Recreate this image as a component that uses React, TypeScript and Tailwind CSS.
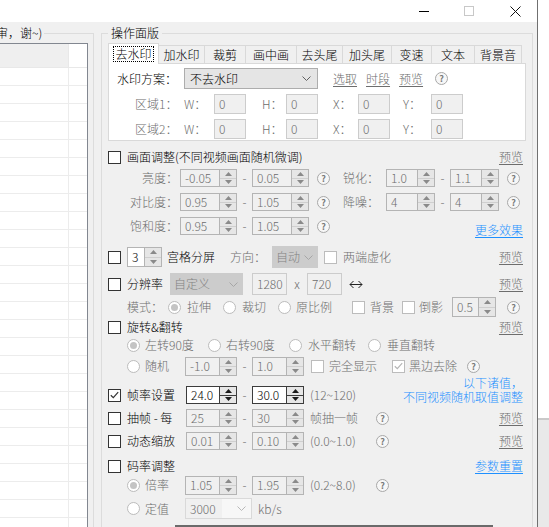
import React from "react";

const GRAY = "text-[#6d6d6d]";

function Check({
  checked = false,
  disabled = false,
  className = "",
}: {
  checked?: boolean;
  disabled?: boolean;
  className?: string;
}) {
  return (
    <span
      className={`flex h-[13px] w-[13px] shrink-0 items-center justify-center border bg-white ${
        disabled ? "border-[#bcbcbc]" : "border-[#333333]"
      } ${className}`}
    >
      {checked && (
        <svg width="9" height="8" viewBox="0 0 9 8">
          <path
            d="M0.8 4.2L3.3 6.6L8.2 1.2"
            fill="none"
            stroke={disabled ? "#b5b5b5" : "#333333"}
            strokeWidth="1.2"
          />
        </svg>
      )}
    </span>
  );
}

function Radio({ checked = false, className = "" }: { checked?: boolean; className?: string }) {
  return (
    <span
      className={`flex h-[13px] w-[13px] shrink-0 items-center justify-center rounded-full border border-[#bcbcbc] bg-white ${className}`}
    >
      {checked && <span className="h-[7px] w-[7px] rounded-full bg-[#c4c4c4]" />}
    </span>
  );
}

function Help({ className = "" }: { className?: string }) {
  return (
    <span
      className={`flex h-[13px] w-[13px] shrink-0 items-center justify-center rounded-full border border-[#a8a8a8] bg-[#f7f7f7] text-[9px] font-bold leading-none text-[#7a7a7a] ${className}`}
    >
      ?
    </span>
  );
}

function Tri({ up = false, color }: { up?: boolean; color: string }) {
  return (
    <svg width="7" height="4" viewBox="0 0 7 4">
      <path d={up ? "M0 4L3.5 0L7 4Z" : "M0 0L3.5 4L7 0Z"} fill={color} />
    </svg>
  );
}

function Chevron({ color }: { color: string }) {
  return (
    <svg width="9" height="5" viewBox="0 0 9 5">
      <path d="M0.5 0.5L4.5 4.5L8.5 0.5" fill="none" stroke={color} />
    </svg>
  );
}

// numeric up-down box
function Spin({
  v,
  className = "",
  on = false,
  dark = false,
}: {
  v: string;
  className?: string;
  on?: boolean;
  dark?: boolean;
}) {
  const line = dark ? "border-[#3c3c3c]" : "border-[#b4b4b4]";
  const arrow = dark ? "#1a1a1a" : "#8a8a8a";
  return (
    <div className={`flex shrink-0 border ${line} ${on ? "bg-white" : "bg-[#f0f0f0]"} ${className}`}>
      <div
        className={`flex flex-1 items-center border-r ${line} pl-[4px] ${
          on ? "text-black" : GRAY
        }`}
      >
        {v}
      </div>
      <div className="flex w-[16px] flex-col bg-[#e6e6e6]">
        <div className="flex flex-1 items-center justify-center">
          <Tri up color={arrow} />
        </div>
        <div className={`flex flex-1 items-center justify-center border-t ${dark ? "border-[#3c3c3c]" : "border-[#cfcfcf]"}`}>
          <Tri color={arrow} />
        </div>
      </div>
    </div>
  );
}

function Combo({ v, className = "" }: { v: string; className?: string }) {
  return (
    <div
      className={`flex shrink-0 items-center justify-between bg-[#cccccc] pl-[4px] pr-[5px] text-[#838383] ${className}`}
    >
      <span>{v}</span>
      <Chevron color="#a6a6a6" />
    </div>
  );
}

function Field({ v, className = "" }: { v: string; className?: string }) {
  return (
    <div
      className={`flex shrink-0 items-center border border-[#cccccc] bg-[#f0f0f0] pl-[4px] ${GRAY} ${className}`}
    >
      {v}
    </div>
  );
}

function Dash() {
  return <span className={`w-[15px] shrink-0 text-center ${GRAY}`}>-</span>;
}

function Preview() {
  return <span className={`ml-auto ${GRAY} underline underline-offset-2`}>预览</span>;
}

const tabs = [
  { t: "加水印", w: "w-[46px]" },
  { t: "裁剪", w: "w-[41px]" },
  { t: "画中画", w: "w-[51px]" },
  { t: "去头尾", w: "w-[46px]" },
  { t: "加头尾", w: "w-[49px]" },
  { t: "变速", w: "w-[40px]" },
  { t: "文本", w: "w-[43px]" },
  { t: "背景音", w: "w-[47px]" },
];

export default function App() {
  return (
    <div className="flex h-[527px] w-[549px] overflow-hidden bg-white font-['Noto_Sans_CJK_SC',sans-serif] text-[12px] font-light leading-none text-black">
      {/* window */}
      <div className="flex w-[538px] shrink-0 flex-col border-r border-[#707070] bg-[#f0f0f0]">
        {/* title bar */}
        <div className="flex h-[22px] shrink-0 items-center bg-white pr-[16px]">
          <span className="ml-auto h-px w-[10px] bg-black" />
          <span className="ml-[35px] h-[10px] w-[10px] border border-[#c8c8c8]" />
          <svg className="ml-[36px]" width="11" height="11" viewBox="0 0 11 11">
            <path d="M0.5 0.5L10.5 10.5M10.5 0.5L0.5 10.5" stroke="#111" />
          </svg>
        </div>

        <div className="flex flex-1">
          {/* left group: file list */}
          <fieldset className="mt-[4px] w-[94px] shrink-0 border-t border-r border-[#dcdcdc] pr-[5px]">
            <legend className="-ml-[4px] pr-[2px] leading-[14px]">审，谢~)</legend>
            <div className="mt-[3px] w-[88px] border-t border-r border-[#828790] bg-white">
              <div className="flex h-[24px] border-b border-[#e8e8e8]">
                <div className="w-[69px] border-r border-[#e8e8e8] bg-[#efefef]" />
              </div>
              {Array.from({ length: 26 }).map((_, i) => (
                <div key={i} className="flex h-[18px] border-b border-[#ececec]">
                  <div className="w-[69px] border-r border-[#ececec]" />
                </div>
              ))}
            </div>
          </fieldset>

          {/* right group: operation panel */}
          <fieldset className="ml-[7px] mt-[4px] w-[432px] shrink-0 border border-[#dcdcdc] pl-[6px]">
            <legend className="px-[3px] leading-[14px]">操作面版</legend>

            {/* tabs */}
            <div className="mt-[3px] flex h-[20px] items-end">
              <div className="relative z-10 -mb-px flex h-[21px] w-[51px] items-center justify-center border-x border-t border-[#d9d9d9] bg-white">
                <span className="px-[1px] py-[1px] outline-1 outline-dotted outline-black">去水印</span>
              </div>
              {tabs.map((t) => (
                <div
                  key={t.t}
                  className={`flex h-[18px] items-center justify-center border-t border-r border-[#d9d9d9] ${t.w}`}
                >
                  {t.t}
                </div>
              ))}
            </div>
            <div className="h-[78px] w-[418px] border border-[#d9d9d9] bg-white pl-[8px] pt-[4px]">
              <div className="flex h-[21px] items-center">
                <span className="w-[67px] shrink-0">水印方案：</span>
                <div className="flex h-[21px] w-[134px] shrink-0 items-center justify-between border border-[#adadad] bg-[#e5e5e5] pl-[5px] pr-[6px]">
                  <span>不去水印</span>
                  <Chevron color="#606060" />
                </div>
                <span className={`ml-[15px] ${GRAY} underline underline-offset-2`}>选取</span>
                <span className={`ml-[9px] ${GRAY} underline underline-offset-2`}>时段</span>
                <span className={`ml-[9px] ${GRAY} underline underline-offset-2`}>预览</span>
                <Help className="ml-[12px]" />
              </div>
              {["区域1：", "区域2："].map((r) => (
                <div key={r} className={`mt-[5px] flex h-[20px] items-center ${GRAY}`}>
                  <span className="ml-[18px] w-[49px] shrink-0">{r}</span>
                  <span className="w-[30px] shrink-0">W：</span>
                  <Field v="0" className="h-[20px] w-[32px]" />
                  <span className="ml-[16px] w-[24px] shrink-0">H：</span>
                  <Field v="0" className="h-[20px] w-[32px]" />
                  <span className="ml-[15px] w-[25px] shrink-0">X：</span>
                  <Field v="0" className="h-[20px] w-[32px]" />
                  <span className="ml-[13px] w-[28px] shrink-0">Y：</span>
                  <Field v="0" className="h-[20px] w-[32px]" />
                </div>
              ))}
            </div>

            {/* option rows */}
            <div className="w-[415px]">
              <div className="mt-[6px] flex h-[20px] items-center">
                <Check />
                <span className="ml-[6px]">画面调整(不同视频画面随机微调)</span>
                <Preview />
              </div>

              <div className="mt-[2px] flex h-[18px] items-center">
                <span className={`w-[70px] shrink-0 text-right ${GRAY}`}>亮度：</span>
                <Spin v="-0.05" className="ml-[2px] h-[18px] w-[57px]" />
                <Dash />
                <Spin v="0.05" className="h-[18px] w-[57px]" />
                <Help className="ml-[8px]" />
                <span className={`ml-[13px] w-[43px] shrink-0 ${GRAY}`}>锐化：</span>
                <Spin v="1.0" className="h-[18px] w-[49px]" />
                <Dash />
                <Spin v="1.1" className="h-[18px] w-[49px]" />
                <Help className="ml-[8px]" />
              </div>

              <div className="mt-[6px] flex h-[18px] items-center">
                <span className={`w-[70px] shrink-0 text-right ${GRAY}`}>对比度：</span>
                <Spin v="0.95" className="ml-[2px] h-[18px] w-[57px]" />
                <Dash />
                <Spin v="1.05" className="h-[18px] w-[57px]" />
                <Help className="ml-[8px]" />
                <span className={`ml-[13px] w-[43px] shrink-0 ${GRAY}`}>降噪：</span>
                <Spin v="4" className="h-[18px] w-[49px]" />
                <Dash />
                <Spin v="4" className="h-[18px] w-[49px]" />
                <Help className="ml-[8px]" />
              </div>

              <div className="mt-[6px] flex h-[18px] items-center">
                <span className={`w-[70px] shrink-0 text-right ${GRAY}`}>饱和度：</span>
                <Spin v="0.95" className="ml-[2px] h-[18px] w-[57px]" />
                <Dash />
                <Spin v="1.05" className="h-[18px] w-[57px]" />
                <Help className="ml-[8px]" />
                <span className="-mb-[8px] ml-auto text-[#1e90ff] underline underline-offset-2">更多效果</span>
              </div>

              <div className="mt-[11px] flex h-[22px] items-center">
                <Check />
                <Spin v="3" on className="ml-[6px] h-[20px] w-[35px]" />
                <span className="ml-[5px] w-[48px] shrink-0">宫格分屏</span>
                <span className={`ml-[15px] w-[42px] shrink-0 ${GRAY}`}>方向：</span>
                <Combo v="自动" className="h-[22px] w-[46px]" />
                <Check disabled className="ml-[6px]" />
                <span className={`ml-[6px] ${GRAY}`}>两端虚化</span>
                <Preview />
              </div>

              <div className="mt-[5px] flex h-[22px] items-center">
                <Check />
                <span className="ml-[6px] w-[43px] shrink-0">分辨率</span>
                <Combo v="自定义" className="h-[22px] w-[73px]" />
                <Field v="1280" className="ml-[9px] h-[22px] w-[35px]" />
                <span className={`w-[20px] shrink-0 text-center ${GRAY}`}>x</span>
                <Field v="720" className="h-[22px] w-[35px]" />
                <svg className="ml-[7px]" width="14" height="9" viewBox="0 0 14 9">
                  <path d="M1 4.5H13M4.5 1L1 4.5L4.5 8M9.5 1L13 4.5L9.5 8" fill="none" stroke="#222" />
                </svg>
                <Preview />
              </div>

              <div className={`mt-[2px] flex h-[20px] items-center ${GRAY}`}>
                <span className="ml-[19px] w-[41px] shrink-0">模式：</span>
                <Radio checked />
                <span className="ml-[6px] w-[36px] shrink-0">拉伸</span>
                <Radio />
                <span className="ml-[6px] w-[36px] shrink-0">裁切</span>
                <Radio />
                <span className="ml-[5px] w-[56px] shrink-0">原比例</span>
                <Check disabled />
                <span className="ml-[5px] w-[32px] shrink-0">背景</span>
                <Check disabled />
                <span className="ml-[4px] w-[33px] shrink-0">倒影</span>
                <Spin v="0.5" className="h-[20px] w-[44px]" />
                <Help className="ml-[11px]" />
              </div>

              <div className="mt-[1px] flex h-[18px] items-center">
                <Check />
                <span className="ml-[6px]">旋转&amp;翻转</span>
                <Preview />
              </div>

              <div className={`flex h-[18px] items-center ${GRAY}`}>
                <Radio checked className="ml-[19px]" />
                <span className="ml-[5px] w-[63px] shrink-0">左转90度</span>
                <Radio />
                <span className="ml-[5px] w-[63px] shrink-0">右转90度</span>
                <Radio />
                <span className="ml-[6px] w-[60px] shrink-0">水平翻转</span>
                <Radio />
                <span className="ml-[6px]">垂直翻转</span>
              </div>

              <div className={`mt-[2px] flex h-[20px] items-center ${GRAY}`}>
                <Radio className="ml-[19px]" />
                <span className="ml-[5px] w-[40px] shrink-0">随机</span>
                <Spin v="-1.0" className="h-[19px] w-[52px]" />
                <Dash />
                <Spin v="1.0" className="h-[19px] w-[52px]" />
                <Check disabled className="ml-[7px]" />
                <span className="ml-[5px] w-[63px] shrink-0">完全显示</span>
                <Check disabled checked />
                <span className="ml-[4px] w-[58px] shrink-0">黑边去除</span>
                <Help />
              </div>

              <div className="mt-[9px] flex h-[20px] items-center">
                <Check checked />
                <span className="ml-[6px] w-[59px] shrink-0">帧率设置</span>
                <Spin v="24.0" on dark className="h-[18px] w-[51px]" />
                <Dash />
                <Spin v="30.0" on dark className="h-[18px] w-[52px]" />
                <span className={`ml-[6px] ${GRAY}`}>(12~120)</span>
                <div className="-mt-[9px] ml-auto flex flex-col items-end gap-[1px] self-start text-[#1e90ff]">
                  <span className="leading-[13px]">以下诸值，</span>
                  <span className="leading-[13px]">不同视频随机取值调整</span>
                </div>
              </div>

              <div className="mt-[3px] flex h-[20px] items-center">
                <Check />
                <span className="ml-[6px] w-[59px] shrink-0">抽帧 - 每</span>
                <Spin v="25" className="h-[18px] w-[51px]" />
                <Dash />
                <Spin v="30" className="h-[18px] w-[52px]" />
                <span className={`ml-[6px] w-[66px] shrink-0 ${GRAY}`}>帧抽一帧</span>
                <Help />
                <Preview />
              </div>

              <div className="mt-[3px] flex h-[20px] items-center">
                <Check />
                <span className="ml-[6px] w-[59px] shrink-0">动态缩放</span>
                <Spin v="0.01" className="h-[18px] w-[51px]" />
                <Dash />
                <Spin v="0.10" className="h-[18px] w-[52px]" />
                <span className={`ml-[6px] w-[66px] shrink-0 ${GRAY}`}>(0.0~1.0)</span>
                <Help />
                <Preview />
              </div>

              <div className="mt-[6px] flex h-[18px] items-center">
                <Check />
                <span className="ml-[6px]">码率调整</span>
                <span className="ml-auto text-[#1e90ff] underline underline-offset-2">参数重置</span>
              </div>

              <div className={`flex h-[20px] items-center ${GRAY}`}>
                <Radio checked className="ml-[19px]" />
                <span className="ml-[5px] w-[40px] shrink-0">倍率</span>
                <Spin v="1.05" className="h-[19px] w-[52px]" />
                <Dash />
                <Spin v="1.95" className="h-[19px] w-[52px]" />
                <span className="ml-[6px] w-[66px] shrink-0">(0.2~8.0)</span>
                <Help />
              </div>

              <div className={`mt-[3px] flex h-[21px] items-center ${GRAY}`}>
                <Radio className="ml-[19px]" />
                <span className="ml-[5px] w-[40px] shrink-0">定值</span>
                <div className="flex h-[21px] w-[67px] shrink-0 items-center justify-between border border-[#d9d9d9] bg-[#f7f7f7] pr-[5px]">
                  <span className="flex h-full items-center bg-[#f0f0f0] pl-[4px] pr-[6px]">3000</span>
                  <Chevron color="#b8b8b8" />
                </div>
                <span className="ml-[6px]">kb/s</span>
              </div>

              <div className="ml-[67px] mt-[6px] h-[2px] w-[318px] bg-[#6a6a6a]" />
            </div>
          </fieldset>
        </div>
      </div>

      {/* desktop behind the window */}
      <div className="flex flex-1 flex-col">
        <div className="h-[418px] bg-white" />
        <div className="flex-1 border-t-2 border-[#c9c9c9] bg-[#e9e9e9]" />
      </div>
    </div>
  );
}
